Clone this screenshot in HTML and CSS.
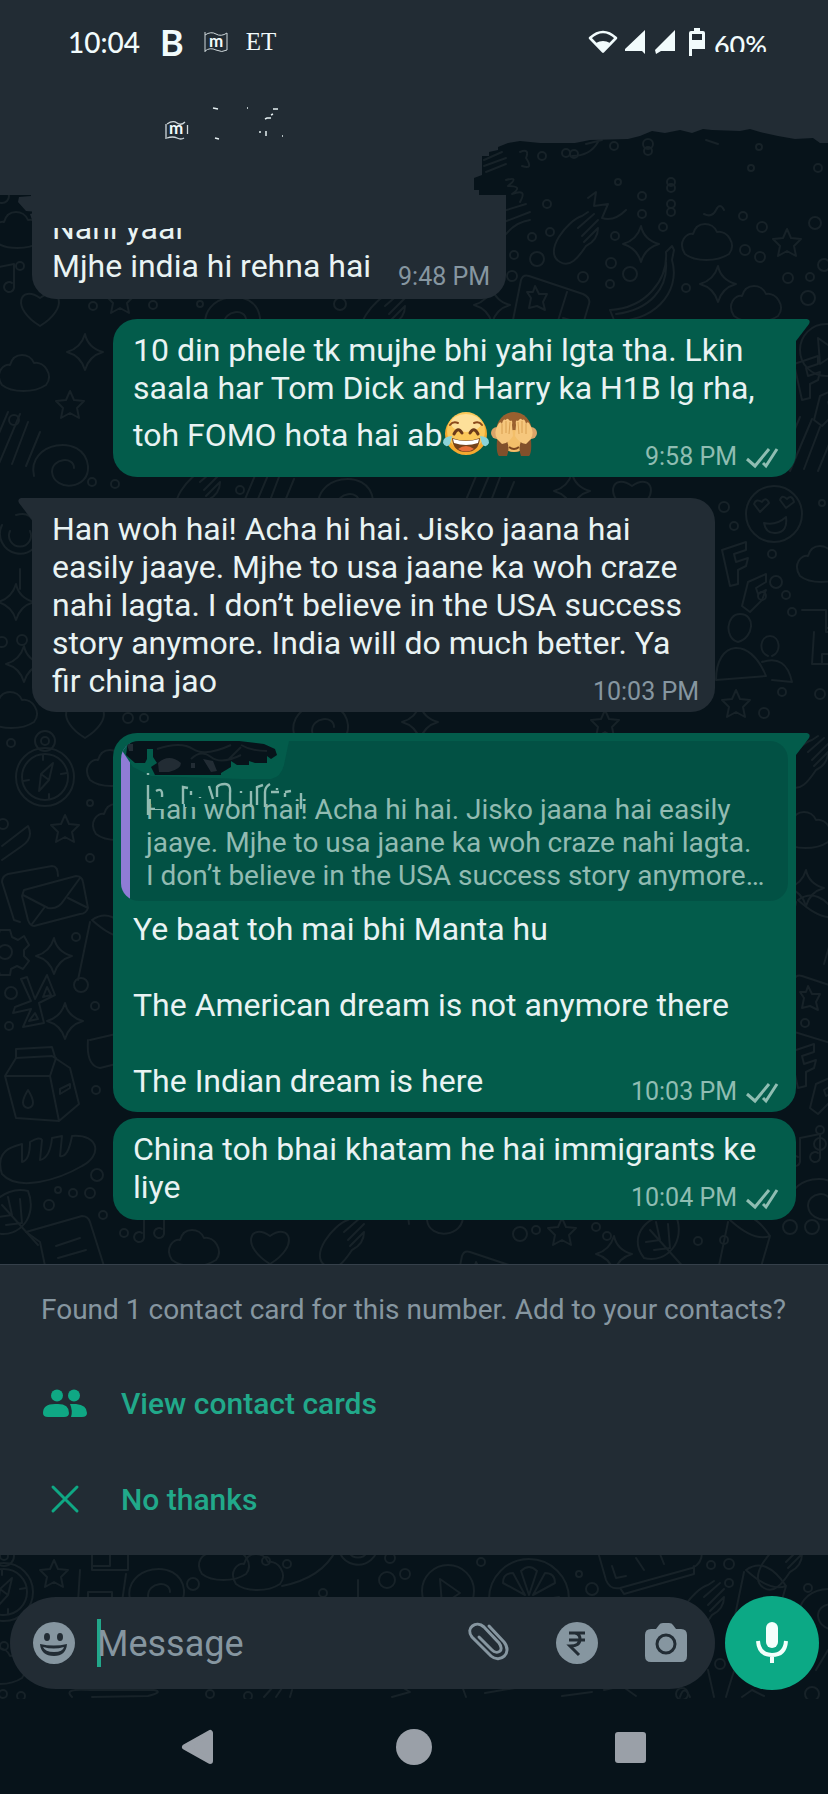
FILE: index.html
```html
<!DOCTYPE html>
<html lang="en">
<head>
<meta charset="utf-8">
<meta name="viewport" content="width=device-width, initial-scale=1">
<title>Chat</title>
<link rel="stylesheet" href="styles.css">
</head>
<body>
<div class="app">
  <svg class="wallpaper" viewBox="0 0 828 1794" preserveAspectRatio="xMidYMin slice" aria-hidden="true">
    <defs>
      <path id="spark" d="M0-18Q3-4 18 0Q4 4 0 18Q-4 4-18 0Q-4-4 0-18Z"/>
      <path id="star" d="M0-14L4-5L14-4L7 3L9 13L0 8L-9 13L-7 3L-14-4L-4-5Z"/>
      <path id="cloud" d="M-22 10C-30-2-20-12-14-10C-10-24 6-22 10-12C20-14 30 0 22 10C10 18-12 18-22 10Z"/>
      <g id="compass"><circle r="29"/><circle r="23"/><circle cy="-36" r="10"/><circle cy="-36" r="4"/><path d="M8-14L4 3L-6 14L-4-3ZM-4-3L4 3M-2-22V-17M4 22V17M-22 4L-16 3M22-4L16-3"/></g>
      <g id="mail"><path d="M-34 22L-40 20L-52-18Q-52-24-46-26L-2-34Q4-34 4-24"/><path d="M-30-10L22-24Q28-24 29-18L34 8Q32 14 26 14L-20 26Q-24 26-26 20L-32-4ZM-31-5L-6 8Q4 10 10 0L26-22M-22 24L-10 8M34 8L14-2"/></g>
      <path id="gear" d="M-5-22H5L7-15L13-12L19-16L24-7L19-2V4L24 9L18 17L12 14L6 17L5 23H-5L-7 16L-13 13L-19 16L-24 8L-18 3V-3L-24-8L-18-16L-12-13L-7-15ZM7 0A7 7 0 1 0-7 0A7 7 0 1 0 7 0Z"/>
      <path id="rune" d="M-8-26L0-4L12-28L20-8L4 0L9 20L-12 24L-4 6L-22 10L-20 4L-4-2L-14-24ZM8-6L12-16L16-8ZM-6 18L0 10L3 16Z"/>
      <g id="milk"><path d="M-37-12L-26-30L10-32L28-20L37 16L17 33L-26 30ZM-37-12L8-12L17 33M8-12L14-30M-26-30V-39L10-41L13-31"/><path d="M-14 2Q-24 18-14 20Q-4 18-14 2ZM18 1L28-4V0L18 6Z"/></g>
      <path id="bread" d="M-46 16C-54-8-34-12-26-14L-26 4Q-18 2-18-16Q-8-22-6-18L-8 2Q2 0 4-20L14-22L12-2Q20 0 24-22C52-24 54-2 34 8C10 22-30 34-46 16Z"/>
      <path id="leaf" d="M-16 22C-34 0-10-26 16-20C26 4 8 28-16 22ZM-10-6L26 34M-4-14L0 4L-14 6M8-12L10 12L-6 14"/>
      <path id="chat" d="M-44-14L12-30Q18-30 20-24L34 20Q34 26 28 28L-16 40Q-22 40-22 34L-30-4ZM-14 0L10-8M-12 12L16 4M-8 24L8 20"/>
      <g id="smile"><circle r="28"/><path d="M-14-2L-20-10Q-18-16-12-12Q-8-18-5-11ZM12-6L6-14Q8-20 13-15Q18-20 20-12ZM-10 9Q2 12 12 3Q14 18 2 19Q-8 20-10 9Z"/></g>
      <path id="people" d="M-28 30C-28-10 6-14 22 26ZM-6-8C-20-12-18-36-4-36C12-36 10-12-6-8ZM24 6C14 2 16-14 26-14C36-14 38 2 28 6M18 12Q42 4 48 32L28 30"/>
      <path id="banana" d="M-36 30C0 28 22 0 20-28L26-34L28-30L26-20C36 14 4 44-32 40ZM-30 34C4 30 22 8 20-18"/>
      <path id="pad" d="M-30-34L24-16Q32-12 30-6L18 34Q14 38 8 36L-44 20Q-50 16-46 10L-38-30Q-36-36-30-34ZM-24-24L-20-16L-12-16L-16-8L-14 0L-22-4L-30-2L-28-12L-32-18L-26-18ZM8-18L-2 14M4 8L18 12"/>
      <g id="citrus"><circle r="40"/><path d="M0-4L-8-28Q0-36 8-28ZM4-4L16-26Q26-26 26-16ZM-4-4L-16-26Q-26-26-26-16ZM6 2L30-2V8Z"/></g>
      <g id="play"><circle r="26"/><path d="M-8-12L12 2L-6 14Z"/></g>
      <path id="cup" d="M-20-30Q0-44 20-14Q4-8-20-30ZM-22-28L-34 30M20-14L6 34"/>
      <path id="note" d="M-10 12V-12L10-16V8M-10 12A5 5 0 1 1-12 7M10 8A5 5 0 1 1 8 3"/>
      <path id="hand" d="M-18 26C-36 16-10-16 4-20L10-24M0-8L16-22M4 0L20-16M6 6L20-8Q20 4 8 10C0 22-8 32-18 26"/>
      <path id="heart" d="M0 20C-30 2-20-22 0-8C20-22 30 2 0 20Z"/>
      <path id="rows" d="M-30 24L-8-28M-18 26L4-26M-4 24L12-18M10 26L24-8"/>
      <path id="swirl" d="M-26 10C-34-24 24-34 28 0C30 24-6 26-8 6C-8-8 14-10 14 2"/>
      <path id="lolly" d="M0 24V44M-18-20A20 20 0 1 0 20-12M-10-14A11 11 0 1 0 10-14M-4-30Q10-34 14-22"/>
      <path id="board" d="M-34-30H-10V-12H8V-30H26V-8H-10V-30M-22-8L-24 24H20L24-4M-14 24V14H10V24"/>
      <path id="letters" d="M-16-28L8-36V-28L-4-24L-2-16L10-20L8-12L0-8V6L-8 8ZM10 4L28-4V4L18 10L20 16L28 12L24 22L12 34L4 28Z"/>
    </defs>
    <g fill="none" stroke="#172228" stroke-width="2" stroke-linejoin="round" stroke-linecap="round">
      <g>
        <use href="#hand" x="578" y="236"/><use href="#spark" x="641" y="244"/><use href="#cloud" x="707" y="244"/><use href="#star" x="787" y="243"/>
        <use href="#banana" x="646" y="280"/><use href="#pad" x="559" y="310"/><use href="#spark" x="718" y="284"/><use href="#cloud" x="756" y="306"/><use href="#spark" x="492" y="305"/>
        <path d="M484 160L502 152M484 166L506 158M486 172L506 164M506 180Q520 176 508 186Q524 186 512 194Q528 188 520 202M500 212L526 204M504 222L530 212M506 234Q516 222 530 220M572 156Q590 156 598 142M586 144L602 140M520 152Q530 148 526 158Q534 170 522 166M706 140L718 144M704 214Q712 218 716 210T724 210M588 198L596 192L594 206L608 204L602 218Q614 222 626 210"/>
      </g>
      <use href="#cloud" x="18" y="232"/><use href="#heart" x="40" y="306"/><use href="#note" x="4" y="280"/><use href="#star" x="120" y="300"/><use href="#swirl" x="232" y="318"/><use href="#hand" x="385" y="314"/>
      <use href="#cloud" x="24" y="375"/><use href="#spark" x="85" y="352"/><use href="#star" x="70" y="405"/><use href="#swirl" x="60" y="466"/><use href="#rows" x="16" y="440"/>
      <use href="#letters" x="810" y="392"/><use href="#play" x="826" y="350"/><use href="#rows" x="808" y="445"/>
      <use href="#rows" x="270" y="487"/><use href="#swirl" x="345" y="500"/><use href="#rows" x="490" y="490"/><use href="#spark" x="572" y="491"/><use href="#heart" x="632" y="494"/><use href="#hand" x="200" y="490"/>
      <use href="#smile" x="774" y="514"/><use href="#letters" x="738" y="578"/><use href="#people" x="744" y="650"/><use href="#cloud" x="822" y="566"/><use href="#star" x="736" y="704"/><use href="#board" x="836" y="640"/>
      <use href="#lolly" x="20" y="545"/><use href="#spark" x="16" y="602"/><use href="#spark" x="24" y="664"/><use href="#cloud" x="12" y="712"/><use href="#heart" x="85" y="718"/><use href="#swirl" x="320" y="725"/><use href="#spark" x="420" y="722"/><use href="#star" x="605" y="724"/>
      <use href="#compass" x="45" y="777"/><use href="#star" x="65" y="829"/><use href="#mail" x="54" y="900"/><use href="#gear" x="5" y="952"/><use href="#spark" x="54" y="956"/><use href="#rune" x="35" y="1003"/><use href="#spark" x="65" y="1021"/>
      <use href="#milk" x="42" y="1088"/><use href="#bread" x="48" y="1158"/><use href="#leaf" x="12" y="1211"/><use href="#chat" x="70" y="1246"/><use href="#cloud" x="112" y="770"/><use href="#cloud" x="118" y="824"/><use href="#cup" x="112" y="950"/><path d="M2 846L28 826Q34 838 22 846L2 860M88 1040Q86 1066 100 1068L116 1064M90 1040L116 1034"/>
      <use href="#hand" x="808" y="760"/><use href="#cloud" x="806" y="832"/><use href="#spark" x="806" y="888"/><use href="#cup" x="818" y="930"/><use href="#pad" x="832" y="1010"/><use href="#letters" x="806" y="1080"/><use href="#note" x="810" y="1150"/><use href="#swirl" x="816" y="1200"/>
      <use href="#note" x="154" y="1226"/><use href="#heart" x="270" y="1244"/><use href="#cloud" x="194" y="1250"/><use href="#swirl" x="435" y="1214"/><use href="#star" x="562" y="1232"/><use href="#leaf" x="660" y="1236"/><use href="#cup" x="750" y="1250"/><use href="#hand" x="344" y="1240"/><use href="#pad" x="500" y="1286"/><use href="#spark" x="614" y="1254"/>
      <use href="#compass" x="4" y="1592"/><use href="#star" x="54" y="1574"/><use href="#board" x="102" y="1578"/><use href="#swirl" x="156" y="1590"/><use href="#cloud" x="224" y="1564"/><use href="#cloud" x="258" y="1574"/><path d="M282 1586Q322 1578 336 1550"/><use href="#lolly" x="358" y="1556"/>
      <use href="#play" x="448" y="1591"/><use href="#citrus" x="529" y="1599"/><path d="M598 1552L606 1580Q610 1590 620 1588L692 1568Q702 1564 702 1552M620 1588L624 1594L694 1574L694 1566M612 1566L616 1578L626 1576M636 1558L644 1570M660 1554L664 1564"/><use href="#cup" x="766" y="1600"/><use href="#hand" x="704" y="1605"/><use href="#hand" x="782" y="1562"/><use href="#swirl" x="826" y="1610"/><use href="#cloud" x="0" y="1668"/>
      <path d="M72 1697Q62 1688 90 1690L154 1690Q164 1692 148 1696L92 1697M264 1697L272 1688M276 1697L282 1688M290 1697L292 1690M392 1697L410 1692L400 1686M462 1686L466 1697M485 1693L515 1688M562 1696L592 1692M604 1690L622 1686L636 1696M680 1697Q684 1684 690 1697M708 1670L714 1697M726 1697Q732 1676 738 1660M742 1697L752 1690L764 1696M816 1670L828 1650"/>
      <g>
        <circle cx="614" cy="146" r="4"/><circle cx="542" cy="156" r="4"/><circle cx="566" cy="153" r="4"/><circle cx="574" cy="154" r="4"/><circle cx="648" cy="144" r="5"/><circle cx="648" cy="151" r="4"/><circle cx="759" cy="147" r="3"/><circle cx="751" cy="168" r="3"/><circle cx="818" cy="168" r="4"/><circle cx="618" cy="182" r="3"/><circle cx="671" cy="182" r="4"/><circle cx="671" cy="188" r="4"/><circle cx="642" cy="196" r="4"/><circle cx="642" cy="214" r="4"/><circle cx="671" cy="204" r="4"/><circle cx="671" cy="212" r="4"/><circle cx="547" cy="204" r="4"/><circle cx="550" cy="232" r="4"/><circle cx="532" cy="237" r="4"/><circle cx="615" cy="236" r="4"/><circle cx="663" cy="227" r="4"/><circle cx="743" cy="216" r="4"/><circle cx="762" cy="227" r="5"/><circle cx="815" cy="223" r="6"/><circle cx="514" cy="255" r="4"/><circle cx="537" cy="259" r="7"/><circle cx="611" cy="263" r="5"/><circle cx="630" cy="274" r="7"/><circle cx="583" cy="277" r="5"/><circle cx="610" cy="284" r="4"/><circle cx="512" cy="276" r="5"/><circle cx="745" cy="250" r="5"/><circle cx="760" cy="257" r="5"/><circle cx="824" cy="265" r="6"/><circle cx="788" cy="278" r="5"/><circle cx="810" cy="277" r="4"/><circle cx="686" cy="288" r="4"/><circle cx="808" cy="298" r="7"/><circle cx="153" cy="305" r="4"/><circle cx="200" cy="304" r="3"/><circle cx="340" cy="304" r="6"/>
        <circle cx="20" cy="266" r="4"/><circle cx="2" cy="196" r="7"/><circle cx="93" cy="306" r="4"/><circle cx="14" cy="420" r="5"/><circle cx="92" cy="482" r="4"/><circle cx="115" cy="484" r="4"/><circle cx="240" cy="490" r="4"/>
        <circle cx="724" cy="507" r="5"/><circle cx="734" cy="526" r="4"/><circle cx="822" cy="503" r="3"/><circle cx="772" cy="554" r="4"/><circle cx="776" cy="582" r="6"/><circle cx="762" cy="596" r="4"/><circle cx="786" cy="595" r="4"/><circle cx="792" cy="612" r="4"/><circle cx="764" cy="713" r="5"/><circle cx="782" cy="692" r="4"/><circle cx="820" cy="694" r="5"/><circle cx="22" cy="640" r="5"/><circle cx="2" cy="642" r="5"/><circle cx="128" cy="718" r="5"/><circle cx="144" cy="718" r="4"/>
        <circle cx="11" cy="743" r="4"/><circle cx="90" cy="803" r="3"/><circle cx="90" cy="858" r="4"/><circle cx="3" cy="824" r="5"/><circle cx="76" cy="937" r="4"/><circle cx="81" cy="985" r="7"/><circle cx="11" cy="993" r="6"/><circle cx="95" cy="1006" r="4"/><circle cx="9" cy="1026" r="4"/><circle cx="96" cy="1090" r="4"/><circle cx="97" cy="1175" r="6"/><circle cx="90" cy="1193" r="5"/><circle cx="73" cy="1193" r="4"/><circle cx="58" cy="1190" r="3"/><circle cx="49" cy="1205" r="5"/><circle cx="103" cy="1215" r="4"/>
        <circle cx="520" cy="1234" r="7"/><circle cx="536" cy="1230" r="4"/><circle cx="596" cy="1227" r="4"/><circle cx="607" cy="1236" r="4"/><circle cx="698" cy="1241" r="4"/><circle cx="724" cy="1240" r="4"/><circle cx="790" cy="1227" r="7"/><circle cx="812" cy="1227" r="7"/><circle cx="124" cy="1233" r="4"/><circle cx="805" cy="1023" r="4"/><circle cx="820" cy="1144" r="6"/><circle cx="820" cy="1130" r="4"/>
        <circle cx="193" cy="1584" r="6"/><circle cx="266" cy="1561" r="4"/><circle cx="287" cy="1564" r="4"/><circle cx="387" cy="1580" r="8"/><circle cx="405" cy="1574" r="5"/><circle cx="390" cy="1558" r="5"/><circle cx="323" cy="1593" r="4"/><circle cx="481" cy="1562" r="4"/><circle cx="579" cy="1574" r="3"/><circle cx="592" cy="1589" r="6"/><circle cx="711" cy="1565" r="4"/><circle cx="729" cy="1564" r="5"/><circle cx="729" cy="1583" r="4"/><circle cx="808" cy="1588" r="4"/><circle cx="4" cy="1646" r="4"/><circle cx="3" cy="1694" r="4"/><circle cx="21" cy="1696" r="4"/><circle cx="210" cy="1694" r="4"/><circle cx="248" cy="1696" r="4"/><circle cx="720" cy="1664" r="5"/><circle cx="682" cy="1694" r="6"/><circle cx="812" cy="1694" r="7"/>
      </g>
    </g>
  </svg>

  <header class="header">
    <svg class="header-shape" viewBox="0 0 828 220" preserveAspectRatio="none" aria-hidden="true">
      <path fill="#222c34" d="M0 0H828V143L820 143L813 138L795 139L778 136L760 132L750 129L740 131L712 130L703 129L692 133L680 130L665 133L652 131L640 136L628 139L590 140L575 143L540 143L520 141L508 143L498 147L498 150L489 152V156H482V175L474 178V190H479V195L487 198L495 200L497 208H502V211H505V220H32L30 214L38 212L26 211L18 202L19 197L31 196V195H0Z"/>
      <path stroke="#101b21" stroke-width="2" d="M45 203H56"/>
    </svg>
    <div class="status">
      <div class="status-left">
        <span class="clock">10:04</span>
        <span class="brand-b">B</span>
        <svg class="flag" viewBox="0 0 24 22" aria-hidden="true"><use href="#flag-outline"/><text x="12" y="16">m</text></svg>
        <span class="brand-et">ET</span>
      </div>
      <div class="status-right">
        <svg class="wifi" viewBox="0 0 30 24" aria-label="Wi-Fi"><path d="M2 8Q15-4 28 8L15 21.500Z" fill="none" stroke="#f1fbfc" stroke-width="2.600" stroke-linejoin="round"/><path d="M8 13Q15 9 22 13L15 22Z" fill="#f1fbfc"/></svg>
        <svg class="signal" viewBox="0 0 20 24" aria-label="Signal 1"><path fill="#f1fbfc" d="M20 0V24L17 21H0V19Z"/></svg>
        <svg class="signal" viewBox="0 0 20 24" aria-label="Signal 2"><path fill="#f1fbfc" d="M20 0V21H6L1 24L0 20Z"/></svg>
        <svg class="battery" viewBox="0 0 16 28" aria-label="Battery"><path fill="#f1fbfc" fill-rule="evenodd" d="M5 0H11V3H14Q16 3 16 5V21H3V28H0V5Q0 3 2 3H5ZM3 6V12H13V6Z"/></svg>
        <span class="percent">60%</span>
      </div>
    </div>
    <div class="title">
      <svg class="title-marks" viewBox="0 0 124 40" aria-hidden="true">
        <defs><path id="flag-outline" d="M1 1V21M1 4Q7 0 12 3T23 2V19Q18 22 12 19T1 20"/></defs>
        <g transform="translate(0 15)"><path fill="none" stroke="#cfd8db" stroke-width="1.300" d="M1 4V19M2 4Q8 0 12 3T20 2M2 18Q8 16 12 18T19 18M22.500 5V14"/><text x="11" y="14">m</text></g>
        <path fill="none" stroke="#e5eff1" stroke-width="1.500" d="M48 3L53 4M82 3H83M108 4H113M106 10L108 9M100 14L102 13L106 13M95 26V28M101 26V31M117 31H118M50 33L54 34"/>
      </svg>
    </div>
  </header>

  <main class="chat">
    <article class="msg msg-in msg-first">
      <p class="text"><span class="cut">Nahi yaal</span>Mjhe india hi rehna hai</p>
      <span class="meta"><time>9:48 PM</time></span>
    </article>

    <article class="msg msg-out msg-tail msg-emoji">
      <svg class="tail" viewBox="0 0 14 22" aria-hidden="true"><path d="M0 0H11Q15 1 13 5L0 22Z"/></svg>
      <p class="text">10 din phele tk mujhe bhi yahi lgta tha. Lkin saala har Tom Dick and Harry ka H1B lg rha, toh FOMO hota hai ab<svg class="emoji" viewBox="0 0 48 46" role="img" aria-label="Face with tears of joy"><circle cx="24" cy="23" r="21" fill="#f5a92f"/><circle cx="24" cy="20" r="19" fill="#fbc85a"/><ellipse cx="24" cy="12" rx="15" ry="9" fill="#fde09a"/><path d="M8 14Q11 10 16 12M40 14Q37 10 32 12" fill="none" stroke="#8a4a1c" stroke-width="2" stroke-linecap="round"/><path d="M12 23Q16 15 20 22M28 22Q32 15 36 23" fill="none" stroke="#6b3a1a" stroke-width="3" stroke-linecap="round"/><path d="M10 27Q24 32 38 27Q37 41 24 41Q11 41 10 27Z" fill="#74421b"/><path d="M11 28Q24 32 37 28L36 32Q24 36 12 32Z" fill="#fff"/><path d="M16 38Q24 32 32 38Q24 43 16 38Z" fill="#e8703a"/><path d="M10 25Q0 26 1 32Q4 38 8 33ZM38 25Q48 26 47 32Q44 38 40 33Z" fill="#8bd3d8"/></svg><svg class="emoji" viewBox="0 0 48 46" role="img" aria-label="See-no-evil monkey"><circle cx="7" cy="22" r="6" fill="#dba468"/><circle cx="41" cy="22" r="6" fill="#dba468"/><ellipse cx="24" cy="21" rx="18" ry="20" fill="#99602f"/><ellipse cx="24" cy="30" rx="13" ry="11" fill="#f3bf6a"/><path d="M19 36Q24 40 29 36" fill="none" stroke="#7b461e" stroke-width="2"/><path d="M7 29Q6 42 9 45H17Q20 38 17 30ZM41 29Q42 42 39 45H31Q28 38 31 30Z" fill="#81502b"/><path d="M7 28Q3 20 9 12Q11 10 12 13Q13 7 16 9Q17 6 20 10Q23 8 22 14L23 25Q19 32 12 33ZM41 28Q45 20 39 12Q37 10 36 13Q35 7 32 9Q31 6 28 10Q25 8 26 14L25 25Q29 32 36 33Z" fill="#f6c77d"/><path d="M12 13V23M16 10V22M20 11L19 23M36 13V23M32 10V22M28 11L29 23" stroke="#d9a052" stroke-width="1"/></svg></p>
      <span class="meta"><time>9:58 PM</time><svg class="ticks" viewBox="0 0 32 22" aria-label="Delivered"><path d="M1 13L9 20L23 3M17 17L20 20L31 3"/></svg></span>
    </article>

    <article class="msg msg-in msg-tail">
      <svg class="tail" viewBox="0 0 14 22" aria-hidden="true"><path d="M14 0H3Q-1 1 1 5L14 22Z"/></svg>
      <p class="text">Han woh hai! Acha hi hai. Jisko jaana hai easily jaaye. Mjhe to usa jaane ka woh craze nahi lagta. I don’t believe in the USA success story anymore. India will do much better. Ya fir china jao</p>
      <span class="meta"><time>10:03 PM</time></span>
    </article>

    <article class="msg msg-out msg-tail msg-quoted">
      <svg class="tail" viewBox="0 0 14 22" aria-hidden="true"><path d="M0 0H11Q15 1 13 5L0 22Z"/></svg>
      <blockquote class="quote">
        <svg class="scribble" viewBox="0 0 180 90" aria-hidden="true">
          <path fill="#035c4b" d="M0 0H168L163 24Q160 36 150 38L120 38L30 35L12 26L0 8Z"/>
          <path fill="#07131a" d="M7 0L110-1L143 3L154 8L156 14L150 18L146 15V22H134L128 20V24L116 24L110 20V26L100 32V34H34L30 26L36 22L32 16V8H26V18L24 22H14L5 14Z"/>
          <path fill="#222c34" d="M37 22Q48 12 60 22Q60 28 48 31H38ZM82 18L92 20L96 30L90 31ZM70 22H74V27H70ZM6 3H12V10H8Z"/>
          <path fill="none" stroke="#172228" stroke-width="2" d="M36 8Q60 0 72 8T110 4M70 18Q80 8 90 16T120 14M120 4Q130 10 146 10M108 18L120 6"/>
          <path fill="#025144" d="M30 50H156V63H30Z"/>
          <path fill="#025144" d="M34 62H46V68H34ZM64 62H74V66H64ZM160 60H186V63H160Z"/>
          <g fill="none" stroke="#92bbb2" stroke-width="2.400"><path d="M27 32V34M27 44V74M35 50Q42 46 41 56M62 63V46L67 47M70 50V54M79 56V57M88 45L92 58M96 56V46Q98 43 104 43Q110 43 109 52V64M120 50V52M144 66V51Q144 46 149 43M130 66V50M136 64V46L142 44M156 47V49M150 51H158M164 51L170 50M164 52V56M180 52V68"/></g>
        </svg>
        <p class="quote-text">Han woh hai! Acha hi hai. Jisko jaana hai easily jaaye. Mjhe to usa jaane ka woh craze nahi lagta.<br>I don’t believe in the USA success story anymore…</p>
      </blockquote>
      <p class="text">Ye baat toh mai bhi Manta hu<br><br>The American dream is not anymore there<br><br>The Indian dream is here</p>
      <span class="meta"><time>10:03 PM</time><svg class="ticks" viewBox="0 0 32 22" aria-label="Delivered"><path d="M1 13L9 20L23 3M17 17L20 20L31 3"/></svg></span>
    </article>

    <article class="msg msg-out msg-next">
      <p class="text">China toh bhai khatam he hai immigrants ke liye</p>
      <span class="meta"><time>10:04 PM</time><svg class="ticks" viewBox="0 0 32 22" aria-label="Delivered"><path d="M1 13L9 20L23 3M17 17L20 20L31 3"/></svg></span>
    </article>
  </main>

  <section class="panel">
    <p class="panel-note">Found 1 contact card for this number. Add to your contacts?</p>
    <button class="panel-btn" type="button">
      <svg viewBox="0 0 44 28" aria-hidden="true"><g fill="#0fa884"><circle cx="14" cy="6.500" r="6"/><circle cx="31" cy="6.500" r="6"/><path d="M0 24Q0 15 12 15H15Q26 15 26 24Q26 28 21 28H5Q0 28 0 24ZM28 28Q30 22 27 15H33Q44 16 44 24Q44 28 39 28Z"/></g></svg>
      View contact cards
    </button>
    <button class="panel-btn" type="button">
      <svg viewBox="0 0 44 28" aria-hidden="true"><path d="M10 2L34 26M34 2L10 26" stroke="#0fa884" stroke-width="3" stroke-linecap="round"/></svg>
      No thanks
    </button>
  </section>

  <form class="composer">
    <div class="field">
      <button class="icon-btn" type="button" aria-label="Emoji"><svg viewBox="0 0 42 42"><circle cx="21" cy="21" r="21" fill="#8696a0"/><g fill="#222c34"><ellipse cx="14" cy="15" rx="3" ry="4"/><ellipse cx="27" cy="15" rx="3" ry="4"/><path d="M7 22Q21 25 34 22Q33 34 21 34Q8 34 7 22Z"/></g><path d="M10 25Q21 28 31 25Q30 30 21 30Q12 30 10 25Z" fill="#8696a0"/></svg></button>
      <span class="caret"></span>
      <input class="input" type="text" placeholder="Message" aria-label="Message">
      <button class="icon-btn" type="button" aria-label="Attach"><svg viewBox="0 0 42 42"><path d="M22 4L37 20C46 31 33 42 24 34L5 15C-2 6 9-2 17 5L32 21C38 29 30 33 25 28L12 15" fill="none" stroke="#8696a0" stroke-width="3" stroke-linecap="round"/></svg></button>
      <button class="icon-btn" type="button" aria-label="Payment"><svg viewBox="0 0 42 42"><circle cx="21" cy="21" r="21" fill="#8696a0"/><path d="M13 11H29M13 18H29M14 11Q24 10 24 17Q24 24 14 24L23 33" fill="none" stroke="#222c34" stroke-width="3"/></svg></button>
      <button class="icon-btn" type="button" aria-label="Camera"><svg viewBox="0 0 42 42"><path fill="#8696a0" d="M6 7H11L14 3Q15 1 18 1H24Q27 1 28 3L31 7H36Q42 7 42 13V34Q42 40 36 40H6Q0 40 0 34V13Q0 7 6 7Z"/><circle cx="21" cy="22" r="9" fill="none" stroke="#222c34" stroke-width="3"/></svg></button>
    </div>
    <button class="mic" type="button" aria-label="Voice message"><svg viewBox="0 0 32 44"><rect x="10" y="1" width="12" height="26" rx="6" fill="#f4fffc"/><path d="M2 20Q3 34 16 34Q29 34 30 20M16 34V42" fill="none" stroke="#f4fffc" stroke-width="4"/></svg></button>
  </form>

  <nav class="navbar" aria-label="System">
    <button type="button" aria-label="Back"><svg viewBox="0 0 36 36"><path d="M5 18L30 4V32Z" fill="#9aa0a8" stroke="#9aa0a8" stroke-width="6" stroke-linejoin="round"/></svg></button>
    <button type="button" aria-label="Home"><svg viewBox="0 0 36 36"><circle cx="18" cy="18" r="18" fill="#9aa0a8"/></svg></button>
    <button type="button" aria-label="Recents"><svg viewBox="0 0 36 36"><rect x="3" y="3" width="31" height="31" rx="3" fill="#9aa0a8"/></svg></button>
  </nav>
</div>
</body>
</html>
```
FILE: styles.css
```css
* { box-sizing: border-box; }

body {
  margin: 0;
  background: #07131a;
  font-family: Roboto, "Liberation Sans", sans-serif;
  color: #e9f3f3;
}

p, blockquote { margin: 0; }

button {
  padding: 0;
  border: 0;
  background: none;
  font: inherit;
  color: inherit;
}

svg { display: block; overflow: visible; }

.app {
  position: relative;
  display: flex;
  flex-direction: column;
  min-height: 100vh;
  overflow: hidden;
}

.wallpaper {
  position: absolute;
  top: 0;
  left: 0;
  width: 100%;
}

/* Header */
.header { position: relative; padding-bottom: 47px; }

.header-shape {
  position: absolute;
  top: 0;
  left: 0;
  width: 100%;
  height: 220px;
}

.status {
  position: relative;
  display: flex;
  justify-content: space-between;
  align-items: center;
  height: 84px;
  padding: 0 61px 0 68px;
  color: #f1fbfc;
}

.status-left, .status-right { display: flex; align-items: center; }
.clock { font: 500 28px/36px Lato, sans-serif; }
.brand-b { margin-left: 20px; font: 700 36px/36px Lato, sans-serif; }
.flag { width: 24px; height: 22px; margin-left: 20px; fill: none; stroke: #cfd8db; }
.flag text, .title-marks text { font: 700 17px Lato, sans-serif; text-anchor: middle; fill: #f1fbfc; stroke: none; }
.brand-et { margin-left: 18px; font: 25px/36px "Liberation Serif", serif; }
.wifi { width: 30px; height: 24px; margin-right: 7px; }
.signal { width: 20px; height: 24px; margin-right: 10px; }
.battery { width: 16px; height: 28px; margin: 0 9px 0 4px; }
.percent { height: 20px; overflow: hidden; font: 500 27px/26px Lato, sans-serif; }

.title { position: relative; height: 64px; padding: 21px 0 0 165px; }
.title-marks { width: 124px; height: 40px; }

/* Conversation */
.chat {
  position: relative;
  flex: 1;
  display: flex;
  flex-direction: column;
  align-items: flex-start;
  padding: 0 32px 44px;
}

.msg {
  position: relative;
  display: grid;
  max-width: 683px;
  margin-top: 21px;
  padding: 12px 16px 8px 20px;
  border-radius: 24px;
}

.msg-in { background: #222c34; }
.msg-out { align-self: flex-end; background: #035c4b; }
.msg-first { margin-top: 0; padding-top: 14px; padding-bottom: 10px; border-radius: 0 0 24px 24px; }
.msg-first .text { padding-right: 119px; }
.msg-next { margin-top: 6px; padding-bottom: 10px; }
.msg-in.msg-tail { border-top-left-radius: 0; }
.msg-out.msg-tail { border-top-right-radius: 0; }
.msg-emoji { margin-top: 20px; }
.msg-emoji .text { padding-bottom: 12px; }

.text {
  grid-area: 1 / 1;
  padding-bottom: 4px;
  font-size: 32px;
  line-height: 38px;
}

.cut {
  display: block;
  height: 19px;
  margin-top: 19px;
  line-height: 0;
  overflow: hidden;
}

.emoji {
  display: inline-block;
  width: 48px;
  height: 46px;
  margin-top: 4px;
  vertical-align: -11px;
}

.meta {
  grid-area: 1 / 1;
  align-self: end;
  justify-self: end;
  display: flex;
  align-items: center;
  gap: 9px;
  font-size: 25px;
  line-height: 24px;
  color: #8696a0;
}

.msg-out .meta { color: #8fbdb2; margin-right: 2px; }
.ticks { width: 32px; height: 22px; fill: none; stroke: #8fbdb2; stroke-width: 3; }

.tail { position: absolute; top: 0; width: 14px; height: 22px; }
.msg-in .tail { right: 100%; fill: #222c34; }
.msg-out .tail { left: 100%; fill: #035c4b; }

.msg-quoted { padding-top: 8px; }
.msg-quoted .text, .msg-quoted .meta { grid-area: 2 / 1; }

.quote {
  position: relative;
  margin: 0 -8px 9px -12px;
  padding: 52px 12px 9px 25px;
  border-radius: 18px;
  background: linear-gradient(to right, #8f7cd6 9px, #025144 9px);
  overflow: hidden;
}

.quote-text { font-size: 28px; line-height: 33px; color: #92bbb2; }
.scribble { position: absolute; top: 0; left: 0; width: 180px; height: 90px; }

/* Contact suggestion */
.panel {
  position: relative;
  padding: 24px 0 8px;
  border-top: 1px solid #35404a;
  background: #222c34;
}

.panel-note {
  margin: 0 24px 24px 41px;
  font-size: 28px;
  line-height: 42px;
  color: #8696a0;
}

.panel-btn {
  display: flex;
  align-items: center;
  gap: 34px;
  width: 100%;
  height: 96px;
  padding-left: 43px;
  font-size: 30px;
  font-weight: 500;
  color: #21a98a;
}

.panel-btn svg { width: 44px; height: 28px; }

/* Composer */
.composer {
  position: relative;
  display: flex;
  align-items: center;
  gap: 10px;
  padding: 41px 9px 9px 10px;
}

.field {
  flex: 1;
  display: flex;
  align-items: center;
  min-width: 0;
  height: 92px;
  padding: 0 28px 0 23px;
  border-radius: 46px;
  background: #222c34;
}

.icon-btn svg { width: 42px; height: 42px; }
.icon-btn + .icon-btn { margin-left: 47px; }
.caret { width: 4px; height: 48px; margin: 0 -4px 0 22px; background: #22a78a; }

.input {
  flex: 1;
  min-width: 0;
  height: 50px;
  padding: 2px 0 0;
  border: 0;
  outline: 0;
  background: none;
  font: 36px/48px Roboto, sans-serif;
  color: #e9f3f3;
}

.input::placeholder { color: #8696a0; opacity: 1; }

.mic {
  display: grid;
  place-items: center;
  width: 94px;
  height: 94px;
  border-radius: 50%;
  background: #0ca985;
}

.mic svg { width: 32px; height: 44px; }

/* System navigation */
.navbar {
  position: relative;
  display: flex;
  justify-content: center;
  align-items: center;
  gap: 180px;
  height: 97px;
  border-bottom: 2px solid #000;
  background: #07131a;
}

.navbar svg { width: 36px; height: 36px; }
```
